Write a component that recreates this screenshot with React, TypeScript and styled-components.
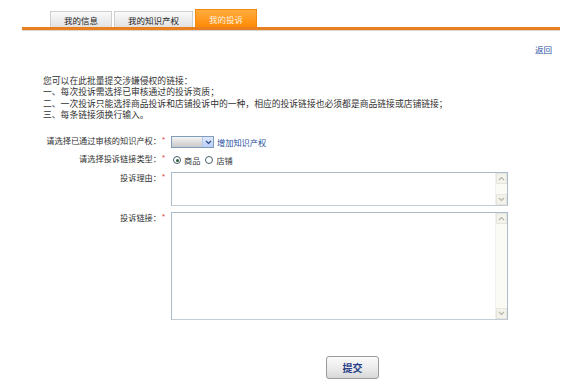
import React from 'react';
import styled, { createGlobalStyle } from 'styled-components';

const GlobalStyle = createGlobalStyle`
  html, body {
    margin: 0;
    padding: 0;
    background: #fff;
  }
  body {
    font-family: "Liberation Sans", "Noto Sans CJK SC", sans-serif;
    color: #333;
  }
`;

const Page = styled.div`
  width: 567px;
  height: 384px;
  overflow: hidden;
`;

const TabBar = styled.div`
  display: flex;
  align-items: flex-end;
  gap: 2px;
  height: 27px;
  margin: 0 7px 0 22px;
  padding-left: 28px;
  border-bottom: 3px solid #e8801f;
  box-shadow: 0 1px 0 #d6d6d6;
`;

const Tab = styled.div<{ $active?: boolean; $w: number }>`
  width: ${(p) => p.$w}px;
  height: ${(p) => (p.$active ? 18 : 16)}px;
  box-sizing: border-box;
  display: flex;
  align-items: center;
  justify-content: center;
  font-size: 8.5px;
  border: 1px solid ${(p) => (p.$active ? '#f0870f' : '#cfcfcf')};
  border-bottom: none;
  color: ${(p) => (p.$active ? '#fff3e0' : '#222')};
  background: ${(p) =>
    p.$active
      ? 'linear-gradient(#ffac3c, #ff8a06)'
      : 'linear-gradient(#fafafa, #e2e2e2)'};
`;

const BackRow = styled.div`
  display: flex;
  justify-content: flex-end;
  padding: 13px 15px 0 0;
  height: 14px;
`;

const BackLink = styled.a`
  font-size: 8.5px;
  color: #1f4f9e;
  text-decoration: none;
  line-height: 14px;
`;

const Notes = styled.div`
  margin: 19px 0 0 43px;
  font-size: 8.8px;
  line-height: 11.3px;
  color: #333;
`;

const Form = styled.div`
  margin-top: 14px;
  display: flex;
  flex-direction: column;
`;

const Row = styled.div<{ $h: number; $top?: boolean; $mt?: number }>`
  display: flex;
  align-items: ${(p) => (p.$top ? 'flex-start' : 'center')};
  height: ${(p) => p.$h}px;
  margin-top: ${(p) => p.$mt ?? 0}px;
`;

const Label = styled.div<{ $top?: boolean }>`
  width: 161px;
  flex: none;
  text-align: right;
  font-size: 8.2px;
  line-height: 12px;
  color: #333;
  padding-top: ${(p) => (p.$top ? 1 : 0)}px;
`;

const Star = styled.span<{ $top?: boolean }>`
  width: 10px;
  flex: none;
  color: #e23b3b;
  font-size: 8px;
  line-height: 12px;
  padding-left: 1px;
  box-sizing: border-box;
  align-self: ${(p) => (p.$top ? 'flex-start' : 'auto')};
  margin-top: ${(p) => (p.$top ? -1 : -4)}px;
`;

const Select = styled.div`
  display: flex;
  width: 43px;
  height: 12px;
  box-sizing: border-box;
  border: 1px solid #7f9db9;
  background: linear-gradient(#f4f4f4, #d9d9d9 60%, #c9c9c9);
`;

const SelectBody = styled.div`
  flex: 1;
`;

const SelectArrow = styled.div`
  width: 10px;
  display: flex;
  align-items: center;
  justify-content: center;
  background: linear-gradient(#e0eafd, #b9cef8);
  border-left: 1px solid #b3c6ee;
`;

const AddLink = styled.a`
  margin-left: 3px;
  font-size: 8.2px;
  color: #1f4f9e;
  text-decoration: none;
`;

const Radio = styled.span<{ $checked?: boolean }>`
  width: 8px;
  height: 8px;
  box-sizing: border-box;
  border-radius: 50%;
  border: 1px solid #4a5f6a;
  background: #fff;
  display: inline-flex;
  align-items: center;
  justify-content: center;
  margin: 0 3px 0 ${(p) => (p.$checked ? 2 : 5)}px;
  &::after {
    content: '';
    display: ${(p) => (p.$checked ? 'block' : 'none')};
    width: 3px;
    height: 3px;
    border-radius: 50%;
    background: #2f5a3a;
  }
`;

const RadioText = styled.span`
  font-size: 8.2px;
  color: #333;
`;

const AreaBox = styled.div<{ $h: number }>`
  display: flex;
  width: 337px;
  height: ${(p) => p.$h}px;
  box-sizing: border-box;
  border: 1px solid #a9bccb;
  border-bottom-color: #c2cdd5;
  background: #fff;
`;

const Area = styled.textarea`
  flex: 1;
  border: none;
  outline: none;
  resize: none;
  padding: 2px;
  font: inherit;
  font-size: 9px;
  background: transparent;
`;

const Rail = styled.div`
  width: 11px;
  display: flex;
  flex-direction: column;
  justify-content: space-between;
  background: #fbfbf5;
  border-left: 1px solid #f0f0ea;
`;

const RailButton = styled.div`
  height: 11px;
  display: flex;
  align-items: center;
  justify-content: center;
  background: #f3f3ec;
  border: 1px solid #e6e6de;
  box-sizing: border-box;
`;

const SubmitRow = styled.div`
  display: flex;
  padding-left: 326px;
  margin-top: 36px;
`;

const Submit = styled.button`
  width: 53px;
  height: 23px;
  border: 1px solid #9a9a9a;
  border-radius: 3px;
  background: linear-gradient(#fbfbfb, #e9e9e9 60%, #d8d8d8);
  color: #253e86;
  font-family: "Liberation Sans", "Noto Sans CJK SC", sans-serif;
  font-size: 10px;
  font-weight: bold;
  padding: 0;
`;

const Chevron = ({ up, color }: { up?: boolean; color: string }) => (
  <svg width="7" height="5" viewBox="0 0 7 5">
    <path
      d={up ? 'M1 4 L3.5 1.5 L6 4' : 'M1 1 L3.5 3.5 L6 1'}
      fill="none"
      stroke={color}
      strokeWidth="1.2"
    />
  </svg>
);

const ScrollRail = () => (
  <Rail>
    <RailButton>
      <Chevron up color="#b5b5a8" />
    </RailButton>
    <RailButton>
      <Chevron color="#b5b5a8" />
    </RailButton>
  </Rail>
);

const notes = [
  '您可以在此批量提交涉嫌侵权的链接：',
  '一、每次投诉需选择已审核通过的投诉资质；',
  '二、一次投诉只能选择商品投诉和店铺投诉中的一种，相应的投诉链接也必须都是商品链接或店铺链接；',
  '三、每条链接须换行输入。',
];

export default function App() {
  return (
    <Page>
      <GlobalStyle />
      <TabBar>
        <Tab $w={62}>我的信息</Tab>
        <Tab $w={79}>我的知识产权</Tab>
        <Tab $w={62} $active>
          我的投诉
        </Tab>
      </TabBar>
      <BackRow>
        <BackLink href="#">返回</BackLink>
      </BackRow>
      <Notes>
        {notes.map((n) => (
          <div key={n}>{n}</div>
        ))}
      </Notes>
      <Form>
        <Row $h={14}>
          <Label>请选择已通过审核的知识产权：</Label>
          <Star>*</Star>
          <Select>
            <SelectBody />
            <SelectArrow>
              <Chevron color="#2a4a8a" />
            </SelectArrow>
          </Select>
          <AddLink href="#">增加知识产权</AddLink>
        </Row>
        <Row $h={14} $mt={4}>
          <Label>请选择投诉链接类型：</Label>
          <Star>*</Star>
          <Radio $checked />
          <RadioText>商品</RadioText>
          <Radio />
          <RadioText>店铺</RadioText>
        </Row>
        <Row $h={34} $top $mt={5}>
          <Label $top>投诉理由：</Label>
          <Star $top>*</Star>
          <AreaBox $h={34}>
            <Area />
            <ScrollRail />
          </AreaBox>
        </Row>
        <Row $h={108} $top $mt={6}>
          <Label $top>投诉链接：</Label>
          <Star $top>*</Star>
          <AreaBox $h={108}>
            <Area />
            <ScrollRail />
          </AreaBox>
        </Row>
      </Form>
      <SubmitRow>
        <Submit>提交</Submit>
      </SubmitRow>
    </Page>
  );
}
